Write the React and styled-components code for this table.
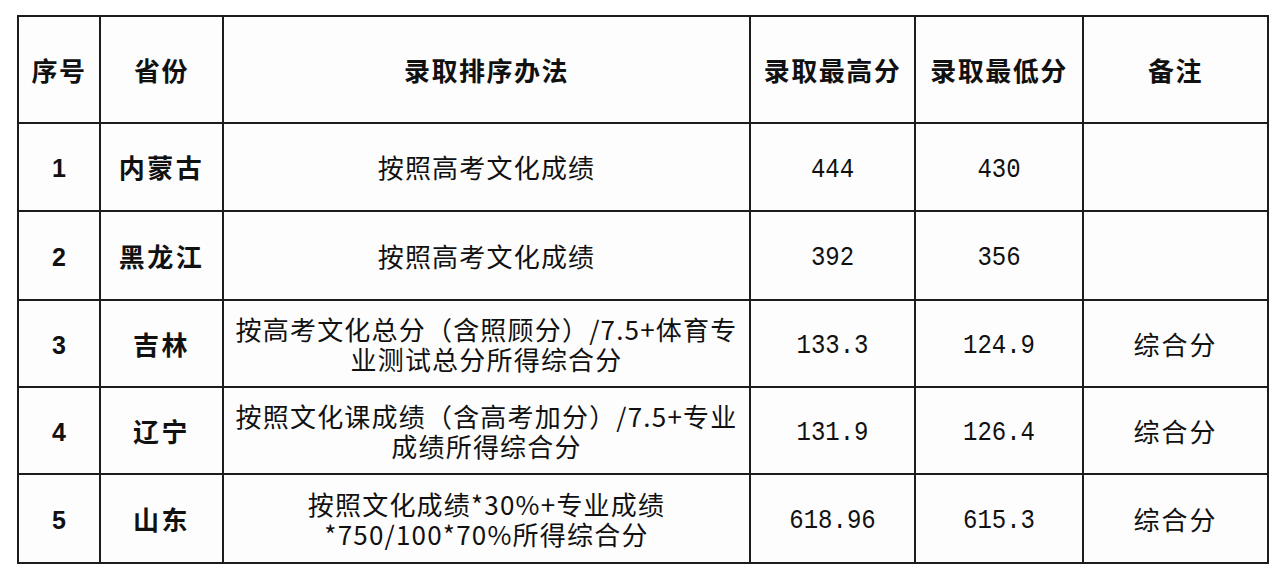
import React from 'react'
import styled, { createGlobalStyle } from 'styled-components'

const GlobalStyle = createGlobalStyle`
    html, body {
        margin: 0;
        padding: 0;
        background: #ffffff;
    }
    body {
        font-family: "Noto Sans CJK SC", "Liberation Sans", sans-serif;
        color: #111111;
    }
`

const columns = [82, 123, 527, 165, 168, 185]
const heads = ['序号', '省份', '录取排序办法', '录取最高分', '录取最低分', '备注']

const rows = [
    { no: '1', prov: '内蒙古', rule: ['按照高考文化成绩'], max: '444', min: '430', note: '', h: 88 },
    { no: '2', prov: '黑龙江', rule: ['按照高考文化成绩'], max: '392', min: '356', note: '', h: 89 },
    { no: '3', prov: '吉林', rule: ['按高考文化总分（含照顾分）/7.5+体育专', '业测试总分所得综合分'], max: '133.3', min: '124.9', note: '综合分', h: 87 },
    { no: '4', prov: '辽宁', rule: ['按照文化课成绩（含高考加分）/7.5+专业', '成绩所得综合分'], max: '131.9', min: '126.4', note: '综合分', h: 87 },
    { no: '5', prov: '山东', rule: ['按照文化成绩*30%+专业成绩', '*750/100*70%所得综合分'], max: '618.96', min: '615.3', note: '综合分', h: 89 },
]

const Page = styled.div`
    padding: 15px 0 0 17px;
`

const Table = styled.table`
    border-collapse: collapse;
    table-layout: fixed;
    width: 1252px;
    background: #fdfdfd;
`

const Col = styled.col`
    width: ${p => p.$w}px;
`

const Row = styled.tr`
    height: ${p => p.$h}px;
`

const HeadCell = styled.th`
    border: 2px solid #1c1c1c;
    font-size: 26px;
    font-weight: 700;
    text-align: center;
    vertical-align: middle;
    padding: 0;
    letter-spacing: 1.5px;
`

const Cell = styled.td`
    border: 2px solid #1c1c1c;
    text-align: center;
    vertical-align: middle;
    padding: 0;
    font-size: 26px;
    line-height: 30px;
    font-weight: ${p => (p.$bold ? 700 : 400)};
    letter-spacing: ${p => p.$spacing || 0}px;
`

const Num = styled.span`
    font-family: "Liberation Sans", sans-serif;
    font-weight: 700;
    font-size: 25px;
`

const Score = styled.span`
    font-family: "Liberation Mono", monospace;
    font-size: 24px;
    display: inline-block;
    transform: scaleY(1.15);
`

const Line = styled.div`
    white-space: nowrap;
    line-height: 30px;
`

export default function App() {
    return (
        <Page>
            <GlobalStyle />
            <Table>
                <colgroup>
                    {columns.map((w, i) => <Col key={i} $w={w} />)}
                </colgroup>
                <thead>
                    <Row $h={107}>
                        {heads.map(h => <HeadCell key={h}>{h}</HeadCell>)}
                    </Row>
                </thead>
                <tbody>
                    {rows.map(r => (
                        <Row key={r.no} $h={r.h}>
                            <Cell><Num>{r.no}</Num></Cell>
                            <Cell $bold $spacing={2.5}>{r.prov}</Cell>
                            <Cell $spacing={1.2}>
                                {r.rule.map(l => <Line key={l}>{l}</Line>)}
                            </Cell>
                            <Cell><Score>{r.max}</Score></Cell>
                            <Cell><Score>{r.min}</Score></Cell>
                            <Cell $spacing={2}>{r.note}</Cell>
                        </Row>
                    ))}
                </tbody>
            </Table>
        </Page>
    )
}
